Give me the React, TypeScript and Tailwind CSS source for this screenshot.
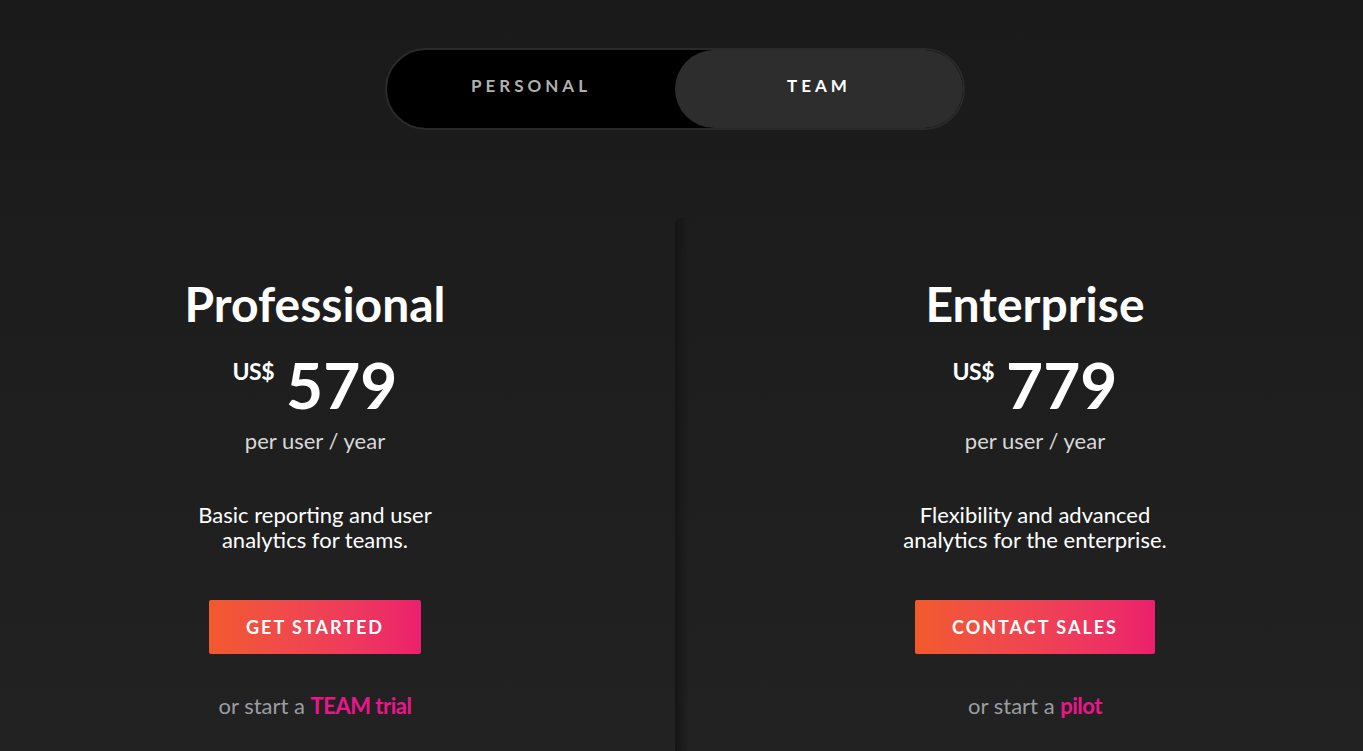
import React, { useState } from 'react';

type Plan = {
    name: string;
    price: string;
    blurb: [string, string];
    cta: string;
    prefix: string;
    link: string;
};

const plans: Plan[] = [
    {
        name: 'Professional',
        price: '579',
        blurb: ['Basic reporting and user', 'analytics for teams.'],
        cta: 'Get started',
        prefix: 'or start a',
        link: 'TEAM trial',
    },
    {
        name: 'Enterprise',
        price: '779',
        blurb: ['Flexibility and advanced', 'analytics for the enterprise.'],
        cta: 'Contact sales',
        prefix: 'or start a',
        link: 'pilot',
    },
];

const PlanColumn: React.FC<{ plan: Plan }> = ({ plan }) => (
    <div className="flex flex-col items-center pt-[58px] text-center">
        <h2 className="text-[48px] leading-[56px] font-bold text-white">{plan.name}</h2>
        <div className="mt-[21px] flex items-start text-white">
            <span className="text-[23px] font-bold leading-none mt-[7px] mr-[12px] tracking-[-0.5px]">US$</span>
            <span className="text-[64px] font-bold leading-[64px]">{plan.price}</span>
        </div>
        <p className="mt-[11px] text-[22px] leading-[26px] text-[#d8d8d8]">per user / year</p>
        <p className="mt-[48px] text-[22px] leading-[25px] text-white">
            {plan.blurb[0]}
            <br />
            {plan.blurb[1]}
        </p>
        <button className="mt-[48px] h-[54px] px-[37px] rounded-[2px] bg-gradient-to-r from-[#f25a2c] to-[#ec1f6c] text-white text-[18px] font-bold uppercase tracking-[2px]">
            {plan.cta}
        </button>
        <p className="mt-[39px] text-[22px] leading-[26px] text-[#9a9ea3]">
            {plan.prefix} <a href="#" className="font-bold text-[#ea168b] tracking-[-0.5px]">{plan.link}</a>
        </p>
    </div>
);

export default function App() {
    const [tab, setTab] = useState<'personal' | 'team'>('team');

    return (
        <div
            className="min-h-[751px] w-full overflow-hidden bg-gradient-to-b from-[#1a1a1a] to-[#222222]"
            style={{ fontFamily: 'Lato, "Open Sans", sans-serif' }}
        >
            <div className="w-[1350px]">
                <div className="flex justify-center pt-[48px]">
                    <div className="flex w-[580px] h-[82px] rounded-full bg-black border-2 border-[#2a2a2a]">
                        <button
                            onClick={() => setTab('personal')}
                            className={`flex-1 rounded-full pb-[6px] text-[17px] font-bold tracking-[4px] ${tab === 'personal' ? 'bg-[#2d2d2d] text-white' : 'text-[#b0b0b0]'}`}
                        >
                            PERSONAL
                        </button>
                        <button
                            onClick={() => setTab('team')}
                            className={`flex-1 rounded-full pb-[6px] text-[17px] font-bold tracking-[4px] ${tab === 'team' ? 'bg-[#2d2d2d] text-white' : 'text-[#b0b0b0]'}`}
                        >
                            TEAM
                        </button>
                    </div>
                </div>

                <div className="mt-[88px] flex">
                    <div className="w-[630px] shrink-0">
                        <PlanColumn plan={plans[0]} />
                    </div>
                    <div className="w-[45px] shrink-0" />
                    <div className="w-[14px] shrink-0 min-h-[533px] rounded-tl-[6px] bg-gradient-to-r from-[#151515] to-transparent" />
                    <div className="flex-1 pl-[31px]">
                        <PlanColumn plan={plans[1]} />
                    </div>
                </div>
            </div>
        </div>
    );
}
